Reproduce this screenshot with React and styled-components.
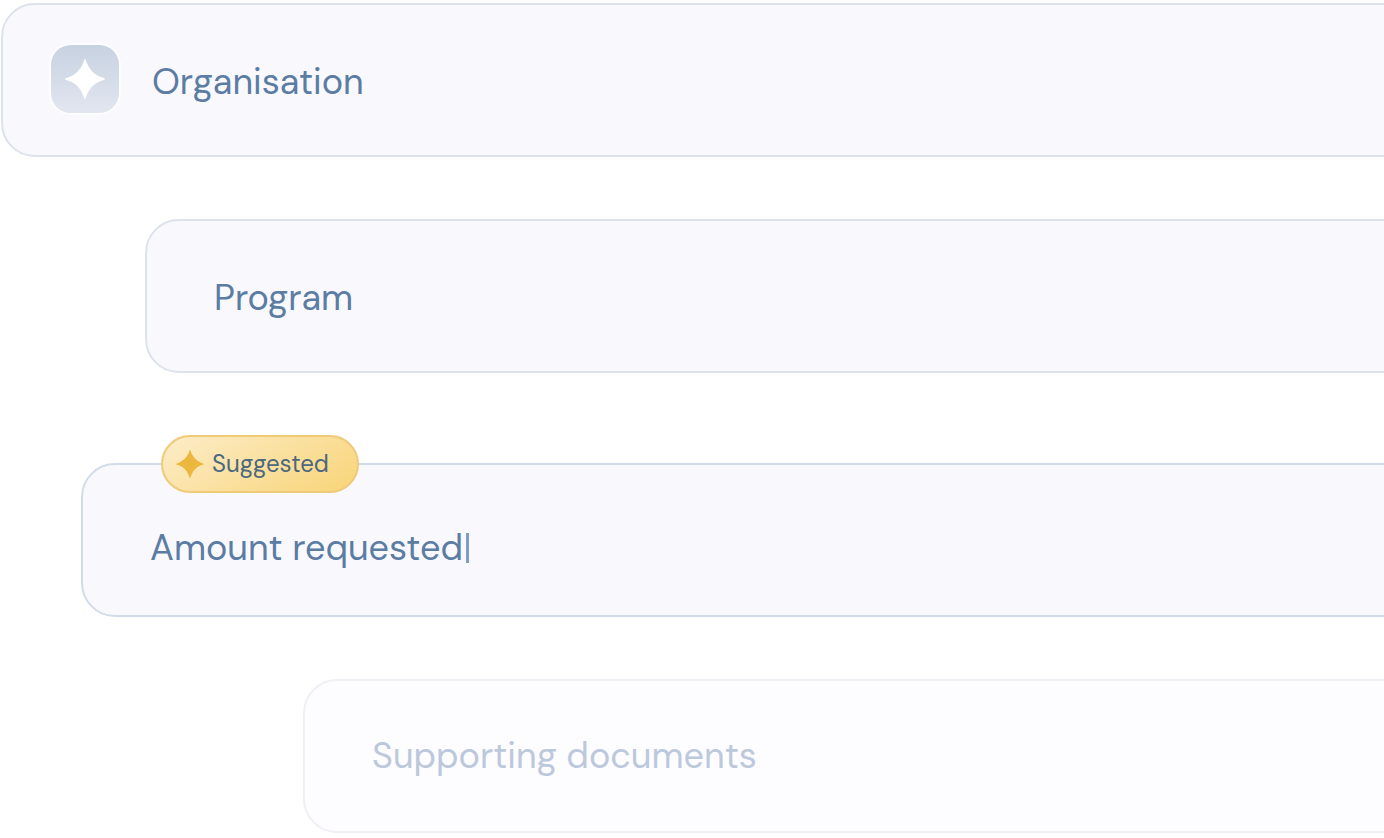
import { useState } from "react";
import styled, { createGlobalStyle } from "styled-components";

const fields = [
    { id: "organisation", text: "Organisation", indent: 1, gap: 0, icon: true },
    { id: "program", text: "Program", indent: 145, gap: 62 },
    { id: "amount", text: "Amount requested", indent: 81, gap: 90, active: true },
    { id: "documents", text: "Supporting documents", indent: 303, gap: 62, faded: true },
];

function Sparkle({ size, color }){
    return(
        <svg width={size} height={size} viewBox="0 0 40 40" fill={color} aria-hidden="true">
            <path d="M20 0C20.8 0 21 2 22.3 5C24.6 10.6 29.4 15.4 35 17.7C38 19 40 19.2 40 20C40 20.8 38 21 35 22.3C29.4 24.6 24.6 29.4 22.3 35C21 38 20.8 40 20 40C19.2 40 19 38 17.7 35C15.4 29.4 10.6 24.6 5 22.3C2 21 0 20.8 0 20C0 19.2 2 19 5 17.7C10.6 15.4 15.4 10.6 17.7 5C19 2 19.2 0 20 0Z" />
        </svg>
    )
}

function FormField({ field }){
    const [value, setValue] = useState(field.text);

    return(
        <Field $indent={field.indent} $gap={field.gap} $active={field.active} $faded={field.faded} $icon={field.icon}>
            {field.active && (
                <Badge>
                    <Sparkle size={28} color="#ebb73f" />
                    Suggested
                </Badge>
            )}
            {field.icon && (
                <IconTile>
                    <Sparkle size={40} color="#ffffff" />
                </IconTile>
            )}
            <FieldInput
                id={field.id}
                type="text"
                aria-label={field.text}
                value={value}
                onChange={e => setValue(e.target.value)}
                $faded={field.faded}
            />
            {field.active && <Caret />}
        </Field>
    )
}

export default function App(){
    return(
        <>
            <GlobalStyle />
            <Form>
                {fields.map(field => <FormField key={field.id} field={field} />)}
            </Form>
        </>
    )
}

const GlobalStyle = createGlobalStyle`
    * {
        box-sizing: border-box;
    }

    body {
        margin: 0;
        background-color: #ffffff;
        font-family: "DM Sans", Inter, sans-serif;
    }
`

const Form = styled.form`
    display: flex;
    flex-direction: column;
    padding: 3px 0 5px;
    overflow: hidden;
`

/* fields run past the right edge of the window */
const Field = styled.div`
    position: relative;
    display: flex;
    align-items: center;
    min-height: 154px;
    margin: ${props => props.$gap}px -40px 0 ${props => props.$indent}px;
    padding: ${props => props.$active ? "16px" : props.$faded ? "0" : "4px"} 48px 0 ${props => props.$icon ? "48px" : "67px"};
    border: 2px solid ${props => props.$faded ? "#eff0f6" : props.$active ? "#d2dce8" : "#dee2eb"};
    border-radius: 34px;
    background-color: ${props => props.$faded ? "#fdfcff" : "#f8f8fd"};
`

const IconTile = styled.div`
    display: flex;
    align-items: center;
    justify-content: center;
    width: 68px;
    height: 68px;
    margin: 0 33px 6px 0;
    border-radius: 20px;
    background: linear-gradient(#c7d2e1, #e2e6f0);
    box-shadow: 0 0 0 2px #fdfdff;
`

const FieldInput = styled.input`
    field-sizing: content;
    padding: 0;
    border: none;
    outline: none;
    background: transparent;
    color: ${props => props.$faded ? "#bcc8dc" : "#5b7ca3"};
    font-family: inherit;
    font-size: 36px;
    font-weight: 400;
    line-height: 46px;
`

const Caret = styled.span`
    width: 3px;
    height: 30px;
    margin-left: 3px;
    background-color: #829dbf;
`

const Badge = styled.div`
    position: absolute;
    top: -30px;
    left: 78px;
    display: flex;
    align-items: center;
    gap: 8px;
    height: 58px;
    padding: 0 28px 0 13px;
    border: 2px solid #efca78;
    border-radius: 29px;
    background: linear-gradient(150deg, #fcebc4 5%, #fade98 60%, #f9d67c 95%);
    color: #4b6880;
    font-size: 24px;
    line-height: 30px;
`
